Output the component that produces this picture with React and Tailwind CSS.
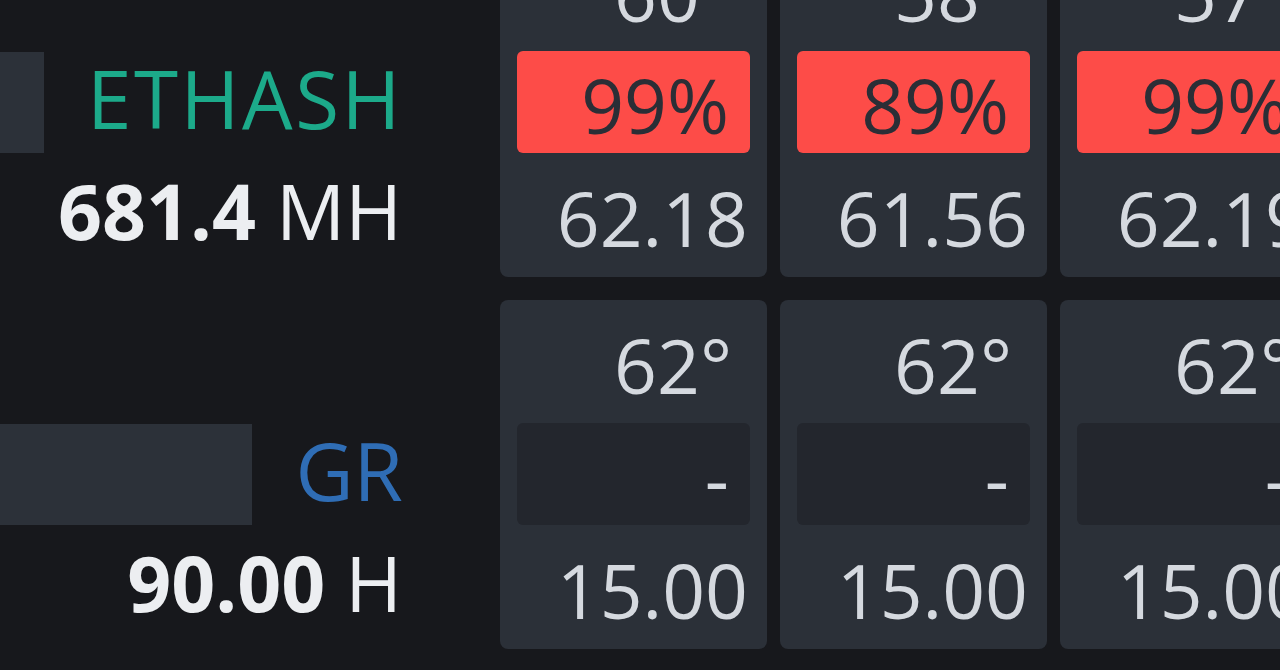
import React from 'react';

const rows = [
  {
    algo: 'ETHASH',
    algoColor: 'text-[#1caa8a] tracking-[2.5px]',
    rate: '681.4',
    unit: 'MH',
    gpus: [
      { temp: '60°', load: '99%', hot: true, value: '62.18' },
      { temp: '58°', load: '89%', hot: true, value: '61.56' },
      { temp: '57°', load: '99%', hot: true, value: '62.19' },
      { temp: '58°', load: '99%', hot: true, value: '62.04' },
    ],
  },
  {
    algo: 'GR',
    algoColor: 'text-[#2f6db5]',
    rate: '90.00',
    unit: 'H',
    gpus: [
      { temp: '62°', load: '-', value: '15.00' },
      { temp: '62°', load: '-', value: '15.00' },
      { temp: '62°', load: '-', value: '15.00' },
      { temp: '62°', load: '-', value: '15.00' },
    ],
  },
];

function GpuCard({ gpu }) {
  return (
    <div className="w-[267px] shrink-0 rounded-lg bg-[#2b3038] px-[17px] pt-[15px] pb-[9px] text-right text-[75px] text-[#d5d9df]">
      <div className="h-[100px] pr-[18px] leading-[100px]">{gpu.temp}</div>
      <div
        className={`mt-[8px] flex h-[102px] items-center justify-end rounded-md pr-[21px] leading-none ${
          gpu.hot ? 'bg-[#fd4c48] text-[#2b2e36]' : 'bg-[#23262d] text-[#d5d9df]'
        }`}
      >
        <span className="mt-[6px]">{gpu.load}</span>
      </div>
      <div className="mt-[15px] h-[100px] pr-[2px] leading-[100px]">{gpu.value}</div>
    </div>
  );
}

function AlgoRow({ row }) {
  return (
    <div className="flex">
      <div className="flex w-[403px] shrink-0 flex-col">
        <div className="h-[123px]" />
        <div className="flex h-[102px] items-center">
          <div className="h-[101px] flex-1 bg-[#2c3139]" />
          <span className={`ml-[43px] mb-[8px] text-[80px] leading-none ${row.algoColor}`}>{row.algo}</span>
        </div>
        <div className="mt-[8px] h-[100px] pr-[1px] text-right text-[77px] leading-[100px] text-[#eceef1]">
          <span className="font-bold">{row.rate}</span> <span>{row.unit}</span>
        </div>
      </div>
      <div className="ml-[97px] flex gap-[13px]">
        {row.gpus.map((gpu, i) => (
          <GpuCard key={i} gpu={gpu} />
        ))}
      </div>
    </div>
  );
}

export default function App() {
  return (
    <div
      className="h-[670px] w-[1280px] overflow-hidden bg-[#17181c]"
      style={{ fontFamily: '"Open Sans", "Noto Sans", sans-serif' }}
    >
      <div className="mt-[-72px] flex flex-col gap-[23px]">
        {rows.map((row) => (
          <AlgoRow key={row.algo} row={row} />
        ))}
      </div>
    </div>
  );
}
